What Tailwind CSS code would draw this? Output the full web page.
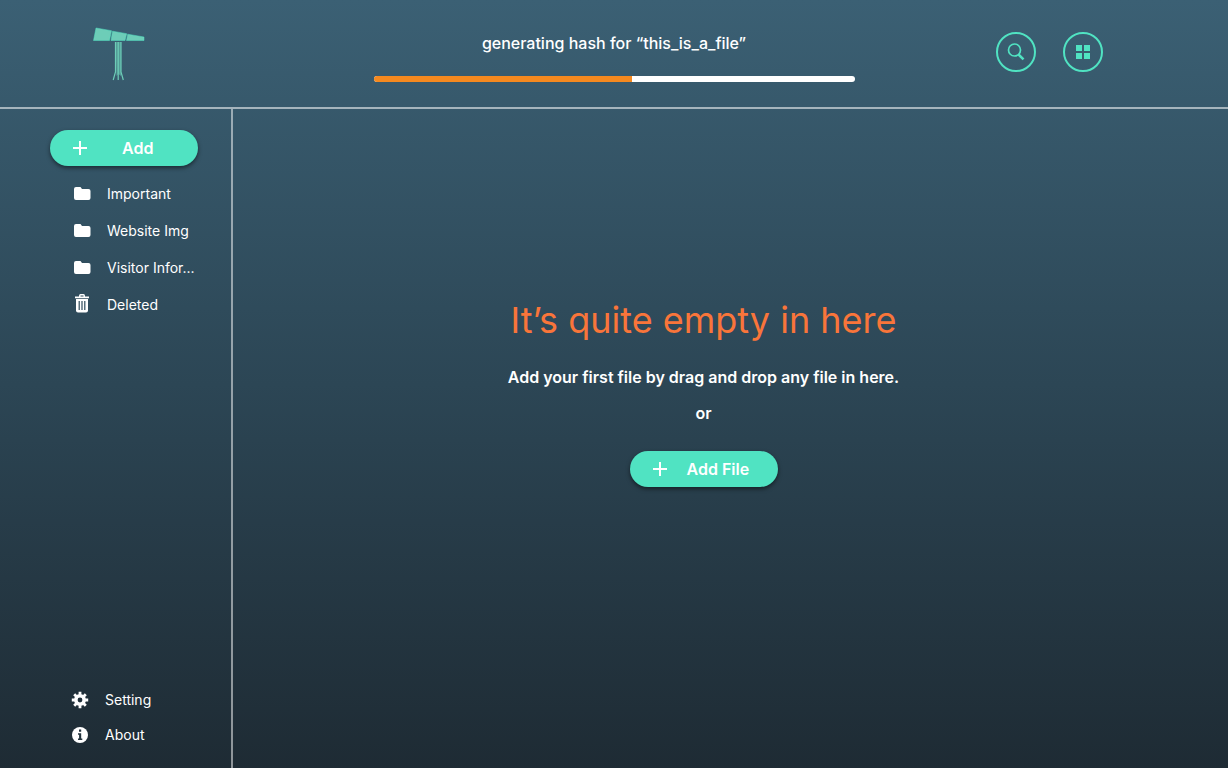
<!DOCTYPE html>
<html lang="en">
<head>
<meta charset="utf-8">
<meta name="viewport" content="width=device-width, initial-scale=1">
<title>Files</title>
<script src="https://cdn.jsdelivr.net/npm/@tailwindcss/browser@4"></script>
</head>
<body class="flex min-h-screen flex-col bg-linear-to-b from-[#3b6074] via-[#2c4655] to-[#1e2b34] font-['Inter','Liberation_Sans',sans-serif] text-white">
  <header class="grid h-[109px] shrink-0 grid-cols-[1fr_2fr_1fr] border-b-2 border-white/55">
    <a href="#" aria-label="Home" class="ml-[92px] mt-[26px] h-14 w-14">
      <svg class="h-14 w-14" viewBox="0 0 56 56">
        <g fill="#6dcdb8" stroke="#50e3c2" stroke-width="0.5">
          <path d="M4 2 19.500 4.700 17.500 14.500H1.500z"/>
          <path d="M20.500 5.200 34.700 7.700 33 14.500H19z"/>
          <path d="M35.700 8.200 52 11v3.500H34.500z"/>
        </g>
        <path d="M23.500 16h5.500v34l-2.500-2-2 2z" fill="#59aa9f" opacity=".8"/>
        <path d="M23.500 16v30l-2.300 8M26.200 16v38M29 16v30l2.300 8" fill="none" stroke="#6dcdb8" stroke-width="1.200"/>
      </svg>
    </a>
    <div class="flex flex-col items-center pt-[31px]">
      <label for="hash-progress" class="text-base leading-6 font-medium">generating hash for “this_is_a_file”</label>
      <progress id="hash-progress" max="481" value="258" class="mt-[21px] block h-1.5 w-full max-w-[481px] appearance-none overflow-hidden rounded-full [&::-webkit-progress-bar]:bg-white [&::-webkit-progress-value]:bg-[#f5891f]"></progress>
    </div>
    <div class="flex justify-end gap-[27px] pr-[125px] pt-8">
      <button aria-label="Search" class="flex size-10 items-center justify-center rounded-full border-2 border-[#50e3c2]">
        <svg class="size-5" viewBox="0 0 20 20" fill="none" stroke="#50e3c2"><circle cx="8.500" cy="8" r="6" stroke-width="1.700"/><path d="m12.500 12.500 5 4.800" stroke-width="2.500"/></svg>
      </button>
      <button aria-label="Grid view" class="flex size-10 items-center justify-center rounded-full border-2 border-[#50e3c2]">
        <svg class="size-5" viewBox="0 0 20 20" fill="#50e3c2"><path d="M3 3h6v6H3zM11 3h6v6h-6zM3 11h6v6H3zM11 11h6v6h-6z"/></svg>
      </button>
    </div>
  </header>
  <div class="flex flex-1">
    <aside class="flex w-[233px] shrink-0 flex-col border-r-2 border-white/50 pt-[21px] pb-4">
      <button class="ml-[50px] flex h-9 w-[148px] items-center rounded-full bg-[#50e3c2] pl-[22px] text-base font-semibold shadow-[0_2px_4px_rgba(0,0,0,0.5)]">
        <svg class="size-4" viewBox="0 0 16 16" stroke="#fff" stroke-width="2"><path d="M8 1v14M1 8h14"/></svg>
        <span class="ml-[34px]">Add</span>
      </button>
      <nav aria-label="Folders" class="mt-[9px] ml-[73px] text-sm">
        <a href="#" class="flex h-[37px] items-center gap-4"><svg class="size-[18px]" viewBox="0 0 18 18" fill="#fff"><path d="M3 2h4.500L9 4h6.500A2 2 0 0 1 17.500 6v7a2 2 0 0 1-2 2H3a2 2 0 0 1-2-2V4a2 2 0 0 1 2-2z"/></svg>Important</a>
        <a href="#" class="flex h-[37px] items-center gap-4"><svg class="size-[18px]" viewBox="0 0 18 18" fill="#fff"><path d="M3 2h4.500L9 4h6.500A2 2 0 0 1 17.500 6v7a2 2 0 0 1-2 2H3a2 2 0 0 1-2-2V4a2 2 0 0 1 2-2z"/></svg>Website Img</a>
        <a href="#" class="flex h-[37px] items-center gap-4"><svg class="size-[18px]" viewBox="0 0 18 18" fill="#fff"><path d="M3 2h4.500L9 4h6.500A2 2 0 0 1 17.500 6v7a2 2 0 0 1-2 2H3a2 2 0 0 1-2-2V4a2 2 0 0 1 2-2z"/></svg>Visitor Infor...</a>
        <a href="#" class="flex h-[37px] items-center gap-4"><svg class="h-[22px] w-[18px]" viewBox="0 0 18 22"><path d="M6 2.500V2Q6 0 7.500 0h3Q12 0 12 2v.5h4v1.700H2V2.500zM7.500 2.500h3V1.500h-3z" fill="#fff" fill-rule="evenodd"/><path d="M3 5h12v11.500q0 2-2 2H5q-2 0-2-2z" fill="#fff"/><path d="M6.200 7v9M9 7v9M11.800 7v9" stroke="#2f4b5b" stroke-width="1.200"/></svg>Deleted</a>
      </nav>
      <nav aria-label="Application" class="mt-auto ml-[71px] text-sm">
        <a href="#" class="flex h-[35px] items-center gap-4"><svg class="size-[18px]" viewBox="0 0 18 18"><circle cx="9" cy="9" r="4.200" fill="none" stroke="#fff" stroke-width="3.600"/><path d="M9 .8v3M9 14.200v3M.8 9h3M14.200 9h3M3.200 3.200l2.200 2.200M12.600 12.600l2.200 2.200M3.200 14.800l2.200-2.200M12.600 5.400l2.200-2.200" stroke="#fff" stroke-width="2.800"/></svg>Setting</a>
        <a href="#" class="flex h-[35px] items-center gap-4"><svg class="size-[18px]" viewBox="0 0 18 18"><circle cx="9" cy="9" r="8" fill="#fff"/><path d="M8 3.500h2.200v2.200H8zM7 7.200h3.200v5.300h1.100V14H7v-1.500h1.100V8.700H7z" fill="#22323c"/></svg>About</a>
      </nav>
    </aside>
    <main class="flex min-w-0 flex-1 flex-col items-center pt-[187px] pr-[54px] text-center">
      <h1 class="text-4xl leading-[48px] text-[#f9753a]">It’s quite empty in here</h1>
      <p class="mt-[21px] text-base leading-6 font-semibold">Add your first file by drag and drop any file in here.</p>
      <p class="mt-3 text-base leading-6 font-semibold">or</p>
      <button class="mt-[26px] flex h-9 w-[148px] items-center rounded-full bg-[#50e3c2] pl-[22px] text-base font-semibold shadow-[0_2px_4px_rgba(0,0,0,0.5)]">
        <svg class="size-4" viewBox="0 0 16 16" stroke="#fff" stroke-width="2"><path d="M8 1v14M1 8h14"/></svg>
        <span class="ml-[19px]">Add File</span>
      </button>
    </main>
  </div>
</body>
</html>
